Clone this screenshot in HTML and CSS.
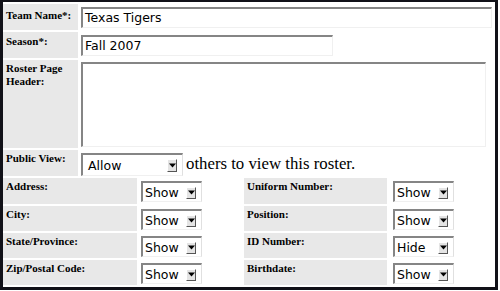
FILE: index.html
```html
<!DOCTYPE html>
<html>
    <head>
        <title>Roster settings</title>
        <link rel="stylesheet" href="styles.css">
    </head>
    <body>
        <div class="frame">
            <div class="main">
                <div class="label first">Team Name*:</div>
                <div class="field"><div class="box team">Texas Tigers</div></div>

                <div class="label second">Season*:</div>
                <div class="field"><div class="box season">Fall 2007</div></div>

                <div class="label">Roster Page<br>Header:</div>
                <div class="field"><div class="box header"></div></div>

                <div class="label">Public View:</div>
                <div class="field public">
                    <span class="pick allow"><span class="val">Allow</span><span class="btn"><svg width="7" height="5" viewBox="0 0 7 5"><path d="M0 0.5H7L3.5 4.5Z" fill="#000"/></svg></span></span>
                    <span class="note">others to view this roster.</span>
                </div>
            </div>

            <div class="details">
                <div class="label">Address:</div>
                <div class="cell left"><span class="pick"><span class="val">Show</span><span class="btn"><svg width="7" height="5" viewBox="0 0 7 5"><path d="M0 0.5H7L3.5 4.5Z" fill="#000"/></svg></span></span></div>
                <div class="label">Uniform Number:</div>
                <div class="cell right"><span class="pick"><span class="val">Show</span><span class="btn"><svg width="7" height="5" viewBox="0 0 7 5"><path d="M0 0.5H7L3.5 4.5Z" fill="#000"/></svg></span></span></div>

                <div class="label">City:</div>
                <div class="cell left"><span class="pick"><span class="val">Show</span><span class="btn"><svg width="7" height="5" viewBox="0 0 7 5"><path d="M0 0.5H7L3.5 4.5Z" fill="#000"/></svg></span></span></div>
                <div class="label">Position:</div>
                <div class="cell right"><span class="pick"><span class="val">Show</span><span class="btn"><svg width="7" height="5" viewBox="0 0 7 5"><path d="M0 0.5H7L3.5 4.5Z" fill="#000"/></svg></span></span></div>

                <div class="label">State/Province:</div>
                <div class="cell left"><span class="pick"><span class="val">Show</span><span class="btn"><svg width="7" height="5" viewBox="0 0 7 5"><path d="M0 0.5H7L3.5 4.5Z" fill="#000"/></svg></span></span></div>
                <div class="label">ID Number:</div>
                <div class="cell right"><span class="pick"><span class="val">Hide</span><span class="btn"><svg width="7" height="5" viewBox="0 0 7 5"><path d="M0 0.5H7L3.5 4.5Z" fill="#000"/></svg></span></span></div>

                <div class="label">Zip/Postal Code:</div>
                <div class="cell left"><span class="pick"><span class="val">Show</span><span class="btn"><svg width="7" height="5" viewBox="0 0 7 5"><path d="M0 0.5H7L3.5 4.5Z" fill="#000"/></svg></span></span></div>
                <div class="label">Birthdate:</div>
                <div class="cell right"><span class="pick"><span class="val">Show</span><span class="btn"><svg width="7" height="5" viewBox="0 0 7 5"><path d="M0 0.5H7L3.5 4.5Z" fill="#000"/></svg></span></span></div>
            </div>
        </div>
    </body>
</html>
```

FILE: styles.css
```css
html {
    background: #fff;
}
body {
    margin: 0;
    font-family: "Liberation Serif", serif;
    color: #000;
}
.frame {
    box-sizing: border-box;
    width: 498px;
    height: 290px;
    border: 3px solid #111118;
    border-top-width: 2px;
    padding-top: 2px;
}
.main {
    display: grid;
    grid-template-columns: 75px 1fr;
    grid-template-rows: 26px 26px 88px 26px;
    gap: 2px;
}
.label {
    background: #e8e8e8;
    font-size: 11px;
    font-weight: bold;
    line-height: 13px;
    padding: 2px 3px 0;
}
.label.first {
    padding-top: 5px;
}
.label.second {
    padding-top: 3px;
}
.field {
    padding: 3px 0 0 1px;
}
.box {
    box-sizing: border-box;
    height: 21px;
    border-top: 2px solid #858585;
    border-left: 2px solid #858585;
    border-right: 1px solid #f0f0f0;
    border-bottom: 1px solid #f0f0f0;
    padding: 1px 2px;
    font-family: "DejaVu Sans", sans-serif;
    font-size: 12.5px;
    line-height: 16px;
}
.team {
    width: 411px;
}
.season {
    width: 252px;
}
.header {
    width: 405px;
    height: 85px;
    margin-top: -1px;
}
.public {
    display: flex;
    align-items: flex-start;
}
.pick {
    box-sizing: border-box;
    display: flex;
    align-items: center;
    width: 61px;
    height: 21px;
    border-top: 2px solid #858585;
    border-left: 2px solid #858585;
    border-right: 1px solid #e0e0e0;
    border-bottom: 1px solid #f0f0f0;
    background: #fff;
    font-family: "DejaVu Sans", sans-serif;
    font-size: 12.5px;
    padding: 1px 5px 0 2px;
}
.pick .val {
    flex: 1;
}
.pick .btn {
    box-sizing: border-box;
    width: 10px;
    height: 12px;
    background: #e4e4e4;
    border-top: 1px solid #fff;
    border-left: 1px solid #fff;
    border-right: 1px solid #555;
    border-bottom: 1px solid #555;
    display: flex;
    align-items: center;
    justify-content: center;
}
.pick.allow {
    width: 102px;
    height: 23px;
    padding-left: 5px;
}
.pick.allow .btn {
    height: 13px;
}
.note {
    font-size: 16.8px;
    line-height: 19px;
    margin: 1px 0 0 3px;
}
.details {
    display: grid;
    grid-template-columns: 134px 103px 143px 106px;
    grid-template-rows: 26px 25px 25px 25px;
    gap: 2px;
    margin-top: 2px;
}
.cell {
    padding-top: 3px;
}
.cell.left {
    padding-left: 2px;
}
.cell.right {
    padding-left: 4px;
}
```
